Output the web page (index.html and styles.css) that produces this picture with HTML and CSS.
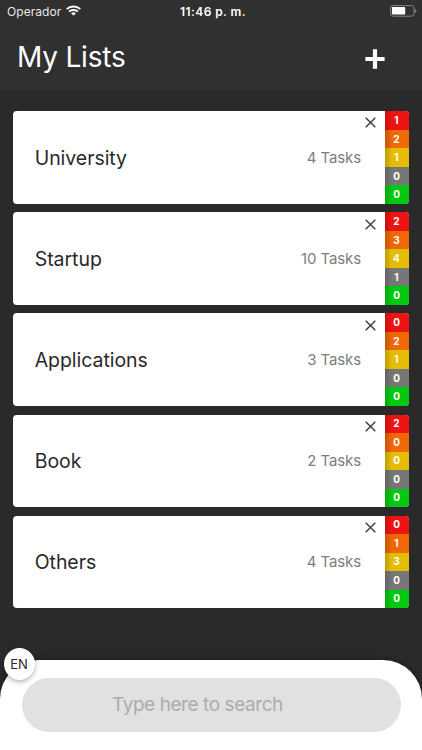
FILE: index.html
```html
<!DOCTYPE html>
<html lang="en">
<head>
<meta charset="utf-8">
<title>My Lists</title>
<link rel="stylesheet" href="styles.css">
</head>
<body>
<div class="app">
  <header class="header">
    <div class="status">
      <div class="carrier"><span>Operador</span>
        <svg class="wifi" width="15" height="11" viewBox="0 0 14 11" preserveAspectRatio="none" fill="none" stroke="#fff" stroke-width="1.9"><path d="M.7 4.1a9 9 0 0 1 12.6 0M2.9 6.6a5.9 5.9 0 0 1 8.2 0"/><path d="M7 10.6 4.8 8.4a3.2 3.2 0 0 1 4.4 0z" fill="#fff" stroke="none"/></svg>
      </div>
      <time class="clock">11:46 p. m.</time>
      <svg class="battery" width="27" height="12" viewBox="0 0 27 12"><rect x=".6" y=".6" width="23.4" height="10.6" rx="2.4" fill="none" stroke="#858585"/><rect x="2" y="2.1" width="13.2" height="7.5" rx=".8" fill="#fff"/><path d="M25 4q1.4.4 1.4 1.9T25 7.8z" fill="#858585"/></svg>
    </div>
    <div class="titlebar">
      <h1>My Lists</h1>
      <svg class="add" width="20" height="20" viewBox="0 0 20 20" stroke="#fff" stroke-width="4.2"><path d="M.4 10h19.2M10 .2v19.6"/></svg>
    </div>
  </header>
  <main class="lists">
    <article class="card"><h2>University</h2><div class="info"><svg class="close" width="11" height="11" viewBox="0 0 11 11"><path d="m.7.7 9.6 9.6m0-9.6L.7 10.3"/></svg><p>4 Tasks</p></div><ul class="counts"><li>1</li><li>2</li><li>1</li><li>0</li><li>0</li></ul></article>
    <article class="card"><h2>Startup</h2><div class="info"><svg class="close" width="11" height="11" viewBox="0 0 11 11"><path d="m.7.7 9.6 9.6m0-9.6L.7 10.3"/></svg><p>10 Tasks</p></div><ul class="counts"><li>2</li><li>3</li><li>4</li><li>1</li><li>0</li></ul></article>
    <article class="card"><h2>Applications</h2><div class="info"><svg class="close" width="11" height="11" viewBox="0 0 11 11"><path d="m.7.7 9.6 9.6m0-9.6L.7 10.3"/></svg><p>3 Tasks</p></div><ul class="counts"><li>0</li><li>2</li><li>1</li><li>0</li><li>0</li></ul></article>
    <article class="card"><h2>Book</h2><div class="info"><svg class="close" width="11" height="11" viewBox="0 0 11 11"><path d="m.7.7 9.6 9.6m0-9.6L.7 10.3"/></svg><p>2 Tasks</p></div><ul class="counts"><li>2</li><li>0</li><li>0</li><li>0</li><li>0</li></ul></article>
    <article class="card"><h2>Others</h2><div class="info"><svg class="close" width="11" height="11" viewBox="0 0 11 11"><path d="m.7.7 9.6 9.6m0-9.6L.7 10.3"/></svg><p>4 Tasks</p></div><ul class="counts"><li>0</li><li>1</li><li>3</li><li>0</li><li>0</li></ul></article>
  </main>
  <footer class="dock">
    <div class="search"><span>Type here to search</span></div>
    <div class="lang">EN</div>
  </footer>
</div>
</body>
</html>
```
FILE: styles.css
```css
* { box-sizing: border-box; }
body { margin: 0; background: #2a2a2a; font-family: Inter, "Liberation Sans", sans-serif; }
h1, h2, p, ul { margin: 0; padding: 0; font-weight: 400; }
svg { display: block; flex: none; }
.app { height: 750px; display: flex; flex-direction: column; overflow: hidden; }
.header { height: 90px; flex: none; background: #303030; color: #fff; }
.status { height: 22px; display: grid; grid-template-columns: 1fr auto 1fr; align-items: center; padding: 0 5px 0 7px; }
.carrier { display: flex; align-items: center; gap: 5px; font-size: 12px; letter-spacing: .06px; color: #e8e8e8; }
.wifi { margin-top: -1px; }
.clock { font-size: 12px; font-weight: 600; letter-spacing: .4px; padding-left: 2px; }
.battery { justify-self: end; }
.titlebar { display: flex; justify-content: space-between; align-items: center; height: 68px; padding: 5px 37.5px 0 17px; }
h1 { font-size: 28px; line-height: 36px; padding-bottom: 4px; letter-spacing: -.2px; }
.lists { flex: 1; padding: 21.3px 13px 0; display: flex; flex-direction: column; gap: 8.6px; }
.card { height: 92.5px; flex: none; display: flex; background: #fff; border-radius: 4px; overflow: hidden; }
.card h2 { flex: 1; align-self: center; padding-left: 21.7px; font-size: 19.5px; line-height: 24px; letter-spacing: -.05px; color: #292929; }
.info { display: flex; flex-direction: column; align-items: flex-end; width: 120px; padding: 6.2px 9.5px 0 0; }
.close { fill: none; stroke: #3c3c3c; stroke-width: 1.4; }
.info p { margin: 19.5px 14.5px 0 0; font-size: 15px; line-height: 20px; letter-spacing: -.1px; color: #7d7d7d; white-space: nowrap; }
.counts { list-style: none; width: 24px; display: grid; grid-template-rows: repeat(5, 1fr); color: #fff; font-size: 10px; font-weight: 700; }
.counts li { display: grid; place-items: center; padding: 0 1px 1px 0; background: linear-gradient(90deg, rgba(0,0,0,.17), transparent 7px) #ee1313; }
.counts li:nth-child(2) { background-color: #f06705; }
.counts li:nth-child(3) { background-color: #e5bd05; }
.counts li:nth-child(4) { background-color: #777; }
.counts li:nth-child(5) { background-color: #03ca10; }
.dock { position: relative; height: 90.5px; flex: none; padding: 18px 21.5px 0; background: #fff; border-radius: 39px 39px 0 0; box-shadow: 0 0 8px rgba(0,0,0,.35); }
.search { height: 54px; border-radius: 27px; background: #e1e1e1; display: flex; align-items: center; padding-left: 90.5px; color: #acacae; font-size: 19px; letter-spacing: -.43px; }
.lang { position: absolute; left: 4px; top: -11.5px; width: 31px; height: 32px; border-radius: 50%; background: #fff; display: grid; place-items: center; padding-right: 1px; font-size: 13px; color: #292929; box-shadow: 0 2px 5px rgba(0,0,0,.3); }
```
